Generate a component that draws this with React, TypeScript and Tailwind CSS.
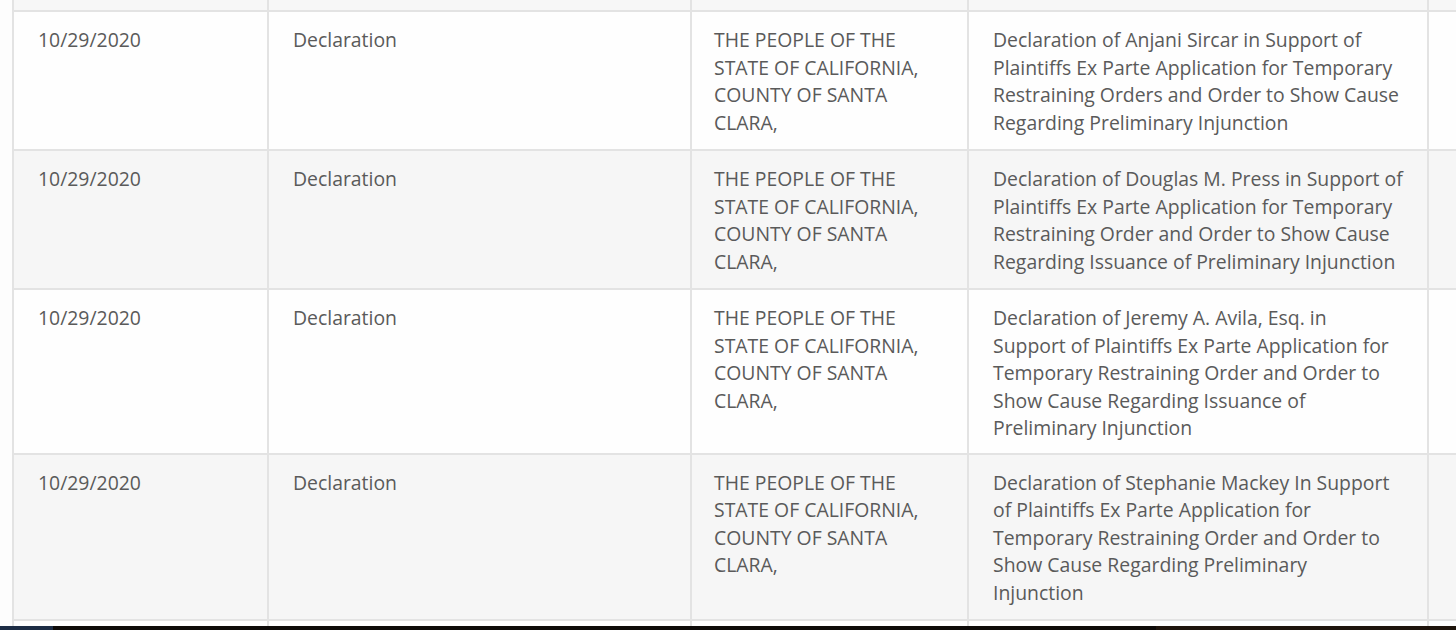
import React from "react";

type Row = { date: string; type: string; party: string[]; desc: string[]; gray: boolean; pb: string };

const party = ["THE PEOPLE OF THE", "STATE OF CALIFORNIA,", "COUNTY OF SANTA", "CLARA,"];

const rows: Row[] = [
  {
    date: "10/29/2020",
    type: "Declaration",
    party,
    desc: [
      "Declaration of Anjani Sircar in Support of",
      "Plaintiffs Ex Parte Application for Temporary",
      "Restraining Orders and Order to Show Cause",
      "Regarding Preliminary Injunction",
    ],
    gray: false,
    pb: "pb-[13px]",
  },
  {
    date: "10/29/2020",
    type: "Declaration",
    party,
    desc: [
      "Declaration of Douglas M. Press in Support of",
      "Plaintiffs Ex Parte Application for Temporary",
      "Restraining Order and Order to Show Cause",
      "Regarding Issuance of Preliminary Injunction",
    ],
    gray: true,
    pb: "pb-[13px]",
  },
  {
    date: "10/29/2020",
    type: "Declaration",
    party,
    desc: [
      "Declaration of Jeremy A. Avila, Esq. in",
      "Support of Plaintiffs Ex Parte Application for",
      "Temporary Restraining Order and Order to",
      "Show Cause Regarding Issuance of",
      "Preliminary Injunction",
    ],
    gray: false,
    pb: "pb-[11px]",
  },
  {
    date: "10/29/2020",
    type: "Declaration",
    party,
    desc: [
      "Declaration of Stephanie Mackey In Support",
      "of Plaintiffs Ex Parte Application for",
      "Temporary Restraining Order and Order to",
      "Show Cause Regarding Preliminary",
      "Injunction",
    ],
    gray: true,
    pb: "pb-[13px]",
  },
];

function Lines({ lines }: { lines: string[] }) {
  return (
    <>
      {lines.map((l, i) => (
        <div key={i} className="whitespace-nowrap">
          {l}
        </div>
      ))}
    </>
  );
}

const cell = "border-r-2 border-[#e3e3e3] pr-[16px] pt-[14px] shrink-0";

export default function App() {
  return (
    <div
      className="w-[1456px] h-[630px] overflow-hidden bg-[#fdfdfd] flex flex-col text-[19.4px] leading-[27.5px] text-[#5a5a5a]"
      style={{ fontFamily: '"Open Sans", "Noto Sans", sans-serif' }}
    >
      <div className="flex-1 overflow-hidden pl-[12px]">
        <div className="w-[1520px] h-full flex flex-col border-l-2 border-[#e3e3e3]">
          <div className="h-[10px] flex bg-[#f7f7f7] shrink-0">
            <div className="w-[255px] border-r-2 border-[#e3e3e3]" />
            <div className="w-[423px] border-r-2 border-[#e3e3e3]" />
            <div className="w-[277px] border-r-2 border-[#e3e3e3]" />
            <div className="w-[460px] border-r-2 border-[#e3e3e3]" />
          </div>
          {rows.map((r, i) => (
            <div
              key={i}
              className={`flex border-t-2 border-[#e3e3e3] shrink-0 ${r.gray ? "bg-[#f6f6f6]" : "bg-[#fefefe]"}`}
            >
              <div className={`${cell} ${r.pb} pl-[24px] w-[255px]`}>{r.date}</div>
              <div className={`${cell} ${r.pb} pl-[24px] w-[423px]`}>{r.type}</div>
              <div className={`${cell} ${r.pb} pl-[22px] w-[277px]`}>
                <Lines lines={r.party} />
              </div>
              <div className={`${cell} ${r.pb} pl-[24px] w-[460px]`}>
                <Lines lines={r.desc} />
              </div>
              <div className="flex-1" />
            </div>
          ))}
          <div className="flex-1 flex border-t-2 border-[#e3e3e3] bg-[#fefefe]">
            <div className="w-[255px] border-r-2 border-[#e3e3e3]" />
            <div className="w-[423px] border-r-2 border-[#e3e3e3]" />
            <div className="w-[277px] border-r-2 border-[#e3e3e3]" />
            <div className="w-[460px] border-r-2 border-[#e3e3e3]" />
          </div>
        </div>
      </div>
      <div className="h-[4px] flex shrink-0">
        <div className="w-[53px] bg-[#1c2c44]" />
        <div className="flex-1 bg-[#0d0a08]" />
        <div className="w-[300px] bg-[#1e140c]" />
      </div>
    </div>
  );
}
